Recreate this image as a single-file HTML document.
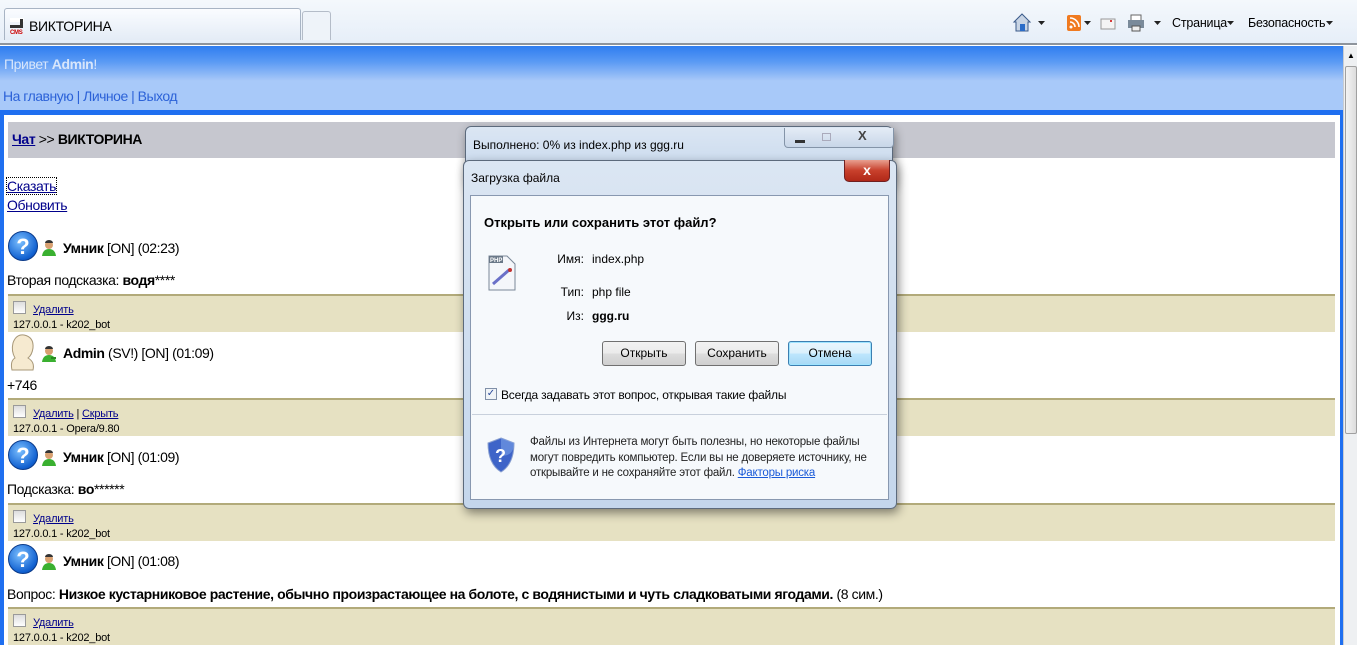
<!DOCTYPE html>
<html><head><meta charset="utf-8"><style>
*{margin:0;padding:0;box-sizing:border-box}
body{width:1357px;height:645px;overflow:hidden;position:relative;background:#fff;font-family:"Liberation Sans","DejaVu Sans",sans-serif;font-size:13px;color:#000}
.abs{position:absolute}
a{color:#00008b}
.tb{left:0;top:0;width:1357px;height:45px;background:linear-gradient(#f4f8fc,#e6eef8);border-bottom:2px solid #8e949c}
.tab{left:4px;top:8px;width:297px;height:32px;background:linear-gradient(#fafcff,#e4ecf6);border:1px solid #a8b4c4;border-bottom:none;border-radius:3px 3px 0 0;font-size:14px;padding:9px 0 0 24px;letter-spacing:-0.3px}
.tab2{left:302px;top:11px;width:29px;height:29px;border:1px solid #b4bcc8;border-bottom:none;border-radius:3px 3px 0 0;background:#eef3f9}
.hdr{left:0;top:46px;width:1343px;height:35px;background:linear-gradient(#2f7df0 0%,#5a9af4 45%,#a9c9f8 100%);color:#d8e6fb;font-size:14px;padding:10px 0 0 4px;letter-spacing:-0.4px}
.nav{left:0;top:81px;width:1343px;height:30px;background:#a8c9f9;font-size:14px;padding:7px 0 0 3px;color:#2c62d8;letter-spacing:-0.5px}
.frame{left:0;top:110px;width:1343px;height:535px;background:#1f6ff0}
.inner{left:4px;top:115px;width:1336px;height:530px;background:#fff}
.bar{left:8px;top:122px;width:1327px;height:36px;background:#c6c7cf;font-size:14px;font-weight:bold;padding:9px 0 0 4px;letter-spacing:-0.4px}
.tan{left:8px;width:1327px;height:38px;background:#e6e1c2;border-top:2px solid #b2aa7a;font-size:11px;padding:5px 0 0 5px;line-height:15px;letter-spacing:-0.2px}
.cb{display:inline-block;width:13px;height:13px;border:1px solid #9a9a9a;background:linear-gradient(#ddd,#fff);vertical-align:-1px;margin-right:7px}
.tan a{font-size:11px}
.q{width:30px;height:30px;border-radius:50%;background:radial-gradient(circle at 40% 35%,#7cc0ff,#1060d0 70%,#0a3c90);color:#fff;font-weight:bold;font-size:22px;text-align:center;line-height:30px;border:1px solid #0a3a8a}
.u{width:14px;height:16px}
.nm{font-size:14px;letter-spacing:-0.4px;white-space:nowrap}
.sb{left:1343px;top:46px;width:14px;height:599px;background:#eef0f2;border-left:1px solid #c8ccd2}
.thumb{left:1345px;top:66px;width:12px;height:368px;background:linear-gradient(90deg,#f4f4f4,#dcdcdc);border:1px solid #a0a0a0;border-radius:2px}
.win{background:linear-gradient(#dbe6f3,#c4d6ec);border:1px solid #5c6a7c;border-radius:6px;box-shadow:2px 4px 10px rgba(0,0,0,.45)}
.btn{height:25px;border:1px solid #707070;border-radius:3px;background:linear-gradient(#f2f2f2 0%,#ebebeb 50%,#dddddd 51%,#cfcfcf);font-size:12px;text-align:center;line-height:23px}
</style></head><body>
<div class="abs tb"></div>
<div class="abs tab"><span class="abs" style="left:5px;top:9px;width:14px;height:14px;font-size:6px;color:#c00;font-weight:bold;line-height:22px;border-top:4px solid #fff"><span class="abs" style="left:0;top:3px;width:11px;height:3px;background:#333"></span><span class="abs" style="left:10px;top:-3px;width:3px;height:9px;background:#333"></span>CMS</span>ВИКТОРИНА</div>
<div class="abs tab2"></div>
<svg class="abs" style="left:1010px;top:10px" width="350" height="24" viewBox="0 0 350 24">
<path d="M4 12 L12 4 L20 12 L18 12 L18 21 L6 21 L6 12Z" fill="#c8d4e4" stroke="#3a5a8a"/><rect x="10" y="14" width="5" height="7" fill="#2b6cc8"/>
<path d="M28 11h7l-3.5 4z" fill="#222"/>
<rect x="57" y="5" width="14" height="16" rx="2" fill="#f07a20"/><circle cx="61" cy="17" r="1.5" fill="#fff"/><path d="M60 12a5 5 0 0 1 5 5M60 8a9 9 0 0 1 9 9" stroke="#fff" stroke-width="1.6" fill="none"/>
<path d="M74 11h7l-3.5 4z" fill="#222"/>
<rect x="91" y="9" width="14" height="10" fill="#f4f4f4" stroke="#999"/><circle cx="101" cy="11" r="1" fill="#c00"/>
<rect x="121" y="5" width="10" height="6" fill="#fff" stroke="#666"/><rect x="118" y="10" width="16" height="8" fill="#7a8a9a"/><rect x="122" y="16" width="8" height="5" fill="#eee" stroke="#555"/>
<path d="M144 11h7l-3.5 4z" fill="#222"/>
<text x="162" y="17" font-family="Liberation Sans" font-size="12.5" letter-spacing="-0.2">Страница</text><path d="M217 11h7l-3.5 4z" fill="#222"/>
<text x="238" y="17" font-family="Liberation Sans" font-size="12.5" letter-spacing="-0.2">Безопасность</text><path d="M316 11h7l-3.5 4z" fill="#222"/>
</svg>
<div class="abs hdr">Привет <b>Admin</b>!</div>
<div class="abs nav">На главную | Личное | Выход</div>
<div class="abs frame"></div>
<div class="abs inner"></div>
<div class="abs sb"></div><div class="abs thumb"></div>
<div class="abs" style="left:1347px;top:51px;font-size:8px">▲</div>
<div class="abs bar"><a href="#" style="color:#00008b">Чат</a> <span style="font-weight:normal">&gt;&gt;</span> ВИКТОРИНА</div>
<div class="abs" style="left:7px;top:177px;font-size:14px;line-height:19px;letter-spacing:-0.4px"><a href="#" style="outline:1px dotted #000">Сказать</a><br><a href="#">Обновить</a></div>

<div class="abs q" style="left:8px;top:231px">?</div>
<svg class="abs u" style="left:42px;top:240px" viewBox="0 0 14 16"><circle cx="7" cy="5" r="4" fill="#d8a070"/><path d="M3 3a4 3 0 0 1 8 0z" fill="#333"/><path d="M0 16 Q1 9 7 9 Q13 9 14 16z" fill="#3ab030"/></svg>
<div class="abs nm" style="left:63px;top:240px"><b>Умник</b> [ON] (02:23)</div>
<div class="abs nm" style="left:7px;top:272px">Вторая подсказка: <b>водя</b>****</div>
<div class="abs tan" style="top:294px"><span class="cb"></span><a href="#">Удалить</a><br>127.0.0.1 - k202_bot</div>
<svg class="abs" style="left:8px;top:333px" width="28" height="38" viewBox="0 0 28 38"><path d="M4 37 Q2 28 7 25 Q3 18 5 10 Q8 1 16 2 Q26 4 25 15 Q24 22 20 25 Q27 29 25 37z" fill="#f6ead0" stroke="#a89878"/></svg>
<svg class="abs u" style="left:42px;top:346px" viewBox="0 0 14 16"><circle cx="7" cy="5" r="4" fill="#d8a070"/><path d="M3 3a4 3 0 0 1 8 0z" fill="#333"/><path d="M0 16 Q1 9 7 9 Q13 9 14 16z" fill="#3ab030"/><path d="M9 11h5v2h-5z" fill="#2a8a20"/></svg>
<div class="abs nm" style="left:63px;top:345px"><b>Admin</b> (SV!) [ON] (01:09)</div>
<div class="abs nm" style="left:7px;top:377px">+746</div>
<div class="abs tan" style="top:398px"><span class="cb"></span><a href="#">Удалить</a> | <a href="#">Скрыть</a><br>127.0.0.1 - Opera/9.80</div>
<div class="abs q" style="left:8px;top:440px">?</div>
<svg class="abs u" style="left:42px;top:450px" viewBox="0 0 14 16"><circle cx="7" cy="5" r="4" fill="#d8a070"/><path d="M3 3a4 3 0 0 1 8 0z" fill="#333"/><path d="M0 16 Q1 9 7 9 Q13 9 14 16z" fill="#3ab030"/></svg>
<div class="abs nm" style="left:63px;top:449px"><b>Умник</b> [ON] (01:09)</div>
<div class="abs nm" style="left:7px;top:481px">Подсказка: <b>во</b>******</div>
<div class="abs tan" style="top:503px"><span class="cb"></span><a href="#">Удалить</a><br>127.0.0.1 - k202_bot</div>
<div class="abs q" style="left:8px;top:544px">?</div>
<svg class="abs u" style="left:42px;top:554px" viewBox="0 0 14 16"><circle cx="7" cy="5" r="4" fill="#d8a070"/><path d="M3 3a4 3 0 0 1 8 0z" fill="#333"/><path d="M0 16 Q1 9 7 9 Q13 9 14 16z" fill="#3ab030"/></svg>
<div class="abs nm" style="left:63px;top:553px"><b>Умник</b> [ON] (01:08)</div>
<div class="abs nm" style="left:7px;top:586px">Вопрос: <b>Низкое кустарниковое растение, обычно произрастающее на болоте, с водянистыми и чуть сладковатыми ягодами.</b> (8 сим.)</div>
<div class="abs tan" style="top:607px"><span class="cb"></span><a href="#">Удалить</a><br>127.0.0.1 - k202_bot</div>

<div class="abs win" style="left:465px;top:126px;width:428px;height:60px"></div>
<div class="abs" style="left:473px;top:138px;font-size:12px">Выполнено: 0% из index.php из ggg.ru</div>
<div class="abs" style="left:784px;top:128px;width:110px;height:20px;border:1px solid #8494a8;border-top:none;border-radius:0 0 4px 4px;background:linear-gradient(#e4ecf6,#c8d6e8)"></div>
<div class="abs" style="left:795px;top:140px;width:10px;height:3px;background:#333"></div>
<div class="abs" style="left:822px;top:133px;width:9px;height:8px;border:1px solid #aab"></div>
<div class="abs" style="left:858px;top:128px;font-size:13px;font-weight:bold;color:#444">X</div>
<div class="abs win" style="left:463px;top:160px;width:434px;height:349px"></div>
<div class="abs" style="left:471px;top:171px;font-size:12px">Загрузка файла</div>
<div class="abs" style="left:844px;top:160px;width:46px;height:22px;border:1px solid #702020;border-top:none;border-radius:0 0 5px 5px;background:linear-gradient(#e8a090,#c8402c 50%,#b02818);color:#fff;font-weight:bold;font-size:14px;text-align:center;line-height:20px">x</div>
<div class="abs" style="left:470px;top:195px;width:419px;height:305px;background:#f6f9fc;border:1px solid #8898b0"></div>
<div class="abs" style="left:484px;top:215px;font-size:13px;font-weight:bold">Открыть или сохранить этот файл?</div>
<svg class="abs" style="left:487px;top:254px" width="30" height="38" viewBox="0 0 30 38"><path d="M2 2h18l8 8v26H2z" fill="#f4f6fa" stroke="#7a8898"/><rect x="2" y="2" width="14" height="7" fill="#6a7888"/><text x="3" y="8" font-size="6" fill="#fff" font-family="Liberation Sans" font-weight="bold">PHP</text><path d="M6 30 L22 16" stroke="#6a70c8" stroke-width="3"/><circle cx="23" cy="16" r="2" fill="#c03030"/></svg>
<div class="abs" style="left:556px;top:252px;font-size:12px;line-height:14px">
<div style="position:absolute;left:0;top:0;width:28px;text-align:right">Имя:</div><div style="position:absolute;left:36px;top:0;white-space:nowrap">index.php</div>
<div style="position:absolute;left:0;top:33px;width:28px;text-align:right">Тип:</div><div style="position:absolute;left:36px;top:33px;white-space:nowrap">php file</div>
<div style="position:absolute;left:0;top:57px;width:28px;text-align:right">Из:</div><div style="position:absolute;left:36px;top:57px;font-weight:bold">ggg.ru</div>
</div>
<div class="abs btn" style="left:602px;top:341px;width:84px">Открыть</div>
<div class="abs btn" style="left:695px;top:341px;width:84px">Сохранить</div>
<div class="abs btn" style="left:788px;top:341px;width:84px;border-color:#3c7fb1;background:linear-gradient(#eaf6fd 0%,#d9f0fc 50%,#bee6fd 51%,#a7d9f5);box-shadow:inset 0 0 0 1px #9ee4ff">Отмена</div>
<div class="abs" style="left:485px;top:388px;width:12px;height:12px;border:1px solid #8090a8;background:#f0f4f8;font-size:10px;line-height:10px;color:#2a4a9a;text-align:center">✓</div>
<div class="abs" style="left:501px;top:388px;font-size:12px;letter-spacing:-0.2px">Всегда задавать этот вопрос, открывая такие файлы</div>
<div class="abs" style="left:472px;top:414px;width:415px;height:1px;background:#c8d0dc"></div>
<svg class="abs" style="left:486px;top:436px" width="30" height="38" viewBox="0 0 30 38"><path d="M15 2 L28 7 Q28 28 15 36 Q2 28 2 7z" fill="#3e64c8" stroke="#8aa0d0"/><path d="M15 2 L28 7 Q28 20 15 20z" fill="#7aa0e8" opacity=".6"/><text x="9" y="26" font-size="18" font-weight="bold" fill="#fff" font-family="Liberation Sans">?</text></svg>
<div class="abs" style="left:530px;top:435px;font-size:11.5px;line-height:15.5px;width:350px;color:#222;letter-spacing:-0.2px">Файлы из Интернета могут быть полезны, но некоторые файлы могут повредить компьютер. Если вы не доверяете источнику, не открывайте и не сохраняйте этот файл. <a href="#" style="color:#1a5ad8">Факторы риска</a></div>
</body></html>
